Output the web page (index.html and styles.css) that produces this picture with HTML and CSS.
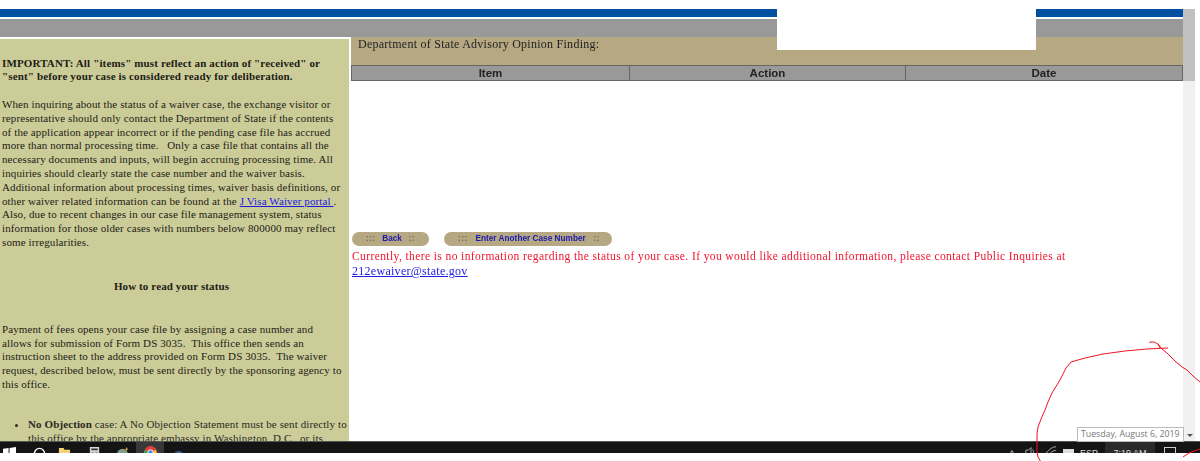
FILE: index.html
```html
<!DOCTYPE html>
<html lang="en">
<head>
<meta charset="utf-8">
<title>J Visa Waiver Case Status</title>
<link rel="stylesheet" href="styles.css">
</head>
<body>
<div class="screen">
  <div class="window">
    <div class="page">
      <div class="blue-bar"></div>
      <div class="gray-bar"></div>
      <div class="columns">
        <aside class="sidebar">
          <p class="important"><b>IMPORTANT: All "items" must reflect an action of "received" or<br>"sent" before your case is considered ready for deliberation.</b></p>
          <p class="para">When inquiring about the status of a waiver case, the exchange visitor or<br>representative should only contact the Department of State if the contents<br>of the application appear incorrect or if the pending case file has accrued<br>more than normal processing time. &nbsp; Only a case file that contains all the<br>necessary documents and inputs, will begin accruing processing time. All<br>inquiries should clearly state the case number and the waiver basis.<br>Additional information about processing times, waiver basis definitions, or<br>other waiver related information can be found at the <a href="#">J Visa Waiver portal </a>.<br>Also, due to recent changes in our case file management system, status<br>information for those older cases with numbers below 800000 may reflect<br>some irregularities.</p>
          <h4 class="how">How to read your status</h4>
          <p class="para fees">Payment of fees opens your case file by assigning a case number and<br>allows for submission of Form DS 3035. &nbsp;This office then sends an<br>instruction sheet to the address provided on Form DS 3035. &nbsp;The waiver<br>request, described below, must be sent directly by the sponsoring agency to<br>this office.</p>
          <ul class="list">
            <li><b>No Objection</b> case: A No Objection Statement must be sent directly to<br>this office by the appropriate embassy in Washington, D.C., or its</li>
          </ul>
        </aside>
        <main class="content">
          <div class="finding">Department of State Advisory Opinion Finding:</div>
          <div class="thead">
            <div class="th">Item</div>
            <div class="th">Action</div>
            <div class="th">Date</div>
          </div>
          <div class="buttons">
            <a class="btn btn-back" href="#"><span class="grip">:::</span><span>Back</span><span class="grip">::</span></a>
            <a class="btn btn-case" href="#"><span class="grip">:::</span><span>Enter Another Case Number</span><span class="grip">::</span></a>
          </div>
          <p class="notice">Currently, there is no information regarding the status of your case. If you would like additional information, please contact Public Inquiries at<br><a href="#">212ewaiver@state.gov</a></p>
        </main>
      </div>
    </div>
    <div class="scrollbar"><div class="thumb"></div></div>
  </div>
  <div class="taskbar">
    <div class="task-left">
      <svg class="ti ti-win" viewBox="0 0 14 14"><path d="M0 2l6-1v5.500H0zM7 1l7-1v6.500H7zM0 7.500h6V13l-6-1zM7 7.500h7V14l-7-1z" fill="#fff"/></svg>
      <svg class="ti ti-search" viewBox="0 0 14 14"><circle cx="7" cy="7" r="5.500" fill="none" stroke="#fff" stroke-width="1.500"/></svg>
      <svg class="ti ti-folder" viewBox="0 0 14 14"><path d="M1 1h5l1 2h6v11H1z" fill="#f3d27a"/></svg>
      <svg class="ti ti-calc" viewBox="0 0 14 14"><path d="M2 0h10v14H2z" fill="#d8d8d8"/><path d="M3.500 1.500h7v2h-7zM4 6h2v1H4zM8 6h2v1H8z" fill="#333"/></svg>
      <svg class="ti ti-globe" viewBox="0 0 14 14"><circle cx="7" cy="8" r="6" fill="#7f9f8a"/><path d="M11 0l2 3-3 1z" fill="#e0a040"/></svg>
      <span class="chrome-tab"><svg class="ti ti-chrome" viewBox="0 0 14 14"><circle cx="7" cy="7" r="7" fill="#e0453a"/><path d="M7 7L1 4 0 8l3 6 4 0z" fill="#3aa757"/><path d="M7 7l6-3 1 4-3 6H7z" fill="#fbc02d"/><circle cx="7" cy="7" r="3.200" fill="#fff"/><circle cx="7" cy="7" r="2.400" fill="#4a86e8"/></svg></span>
      <svg class="ti ti-app" viewBox="0 0 14 14"><circle cx="7" cy="8" r="6" fill="#34507f"/><circle cx="7" cy="6" r="2" fill="#c8d4e8"/></svg>
    </div>
    <div class="tray">
      <span class="chev">^</span>
      <svg class="tray-icon tray-sound" viewBox="0 0 14 12"><path d="M1 5h3l3-3v10L4 9H1zM9 4q2 3 0 6" fill="none" stroke="#bbb"/></svg>
      <svg class="tray-icon tray-wifi" viewBox="0 0 14 12"><path d="M1 9q6-8 12-8M4 11q4-6 9-6" fill="none" stroke="#bbb"/></svg>
      <span class="kbd"></span>
      <span class="lang">ESP</span>
      <span class="clock">7:19 AM</span>
      <span class="notify"></span>
    </div>
  </div>
  <div class="redact"></div>
  <div class="tooltip">Tuesday, August 6, 2019</div>
  <span class="tip-arrow"></span>
  <svg class="scribble" viewBox="0 0 1200 461"><path d="M1150 343l0-1 4 0 4 2 2 4M1168 348l-21 1-22 2-22 3-18 4-14 4-5 6-6 12-8 13-4 9-3 8-4 9-3 8-1 7v17l1 6 3 5 4 5" fill="none" stroke="#f0141e" stroke-width="1"/><path d="M1158 344l4 5 5 4 8 8 7 6 5 3 6 6 7 6M1183 457l6-4 5-2 6-2" fill="none" stroke="#f0141e" stroke-width="1"/></svg>
</div>
</body>
</html>
```

FILE: styles.css
```css
html, body {
  margin: 0;
  padding: 0;
  background: #fff;
}
.screen {
  position: relative;
  width: 1200px;
  height: 461px;
  overflow: hidden;
  background: #fff;
  font-family: "Liberation Serif", "Times New Roman", serif;
}
.window {
  display: flex;
  height: 441px;
  padding-top: 9px;
  box-sizing: border-box;
  padding-right: 5px;
}
.page {
  flex: 1;
  min-width: 0;
  overflow: hidden;
  filter: blur(0.35px);
}
.blue-bar {
  height: 8px;
  background: #0150a0;
}
.gray-bar {
  height: 18px;
  margin-top: 2px;
  background: #999;
}
.columns {
  display: flex;
  height: 404px;
}
.sidebar {
  width: 349px;
  margin-top: 2px;
  margin-right: 2px;
  background: #cccc99;
  color: #1c1c14;
  font-size: 11px;
  line-height: 13.800px;
  letter-spacing: 0.110px;
  overflow: hidden;
  padding-left: 2px;
  box-sizing: border-box;
  flex: none;
}
.sidebar p { margin: 0; }
.important {
  padding-top: 18px;
  line-height: 13px;
  letter-spacing: 0.140px;
}
.para { padding-top: 15px; }
.sidebar a { color: #1a1ae0; }
.how {
  margin: 29px 0 0;
  padding-right: 8px;
  text-align: center;
  font-size: 11px;
  line-height: 14px;
}
.sidebar .fees { padding-top: 30px; }
.list {
  margin: 26px 0 0;
  padding-left: 26px;
  color: #2a2a22;
}
.list li { white-space: nowrap; }
.content {
  flex: 1;
  min-width: 0;
}
.finding {
  height: 28px;
  padding: 1px 0 0 7px;
  box-sizing: border-box;
  background: #b5a882;
  color: #222;
  font-size: 12px;
  line-height: 13px;
  letter-spacing: 0.260px;
}
.thead {
  display: grid;
  grid-template-columns: 278px 276px 1fr;
  height: 16px;
  background: #999;
  border: 1px solid #666;
  box-sizing: border-box;
}
.th {
  font: bold 11.500px/14px "Liberation Sans", Arial, sans-serif;
  color: #222;
  text-align: center;
  border-right: 1px solid #666;
}
.th:last-child { border-right: 0; }
.buttons {
  display: flex;
  gap: 15px;
  margin: 151px 0 0 1px;
}
.btn {
  display: flex;
  align-items: center;
  justify-content: space-between;
  height: 14px;
  padding: 0 14px;
  border-radius: 7px;
  background: #b5a882;
  color: #1a1ab0;
  font: bold 8.200px/14px "Liberation Sans", Arial, sans-serif;
  text-decoration: none;
  box-sizing: border-box;
}
.btn-back { width: 77px; }
.btn-case {
  width: 168px;
  padding: 0 12px 0 14px;
  letter-spacing: 0.040px;
}
.grip {
  color: #6f6a58;
  letter-spacing: 0.500px;
}
.notice {
  margin: 3px 0 0 1px;
  color: #f0142d;
  font-size: 11.500px;
  line-height: 15px;
  letter-spacing: 0.400px;
}
.notice a {
  color: #2020e0;
  font-size: 12px;
  letter-spacing: 0.280px;
}
.scrollbar {
  width: 12px;
  flex: none;
  background: #f0f0f0;
}
.thumb {
  height: 72px;
  background: #c1c1c1;
}
.taskbar {
  display: flex;
  justify-content: space-between;
  height: 12px;
  background: #141414;
  border-top: 1px solid #555;
  box-sizing: border-box;
  overflow: hidden;
}
.task-left {
  display: flex;
  align-items: flex-start;
  height: 40px;
}
.ti {
  width: 13px;
  height: 13px;
  flex: none;
  margin-top: 5px;
}
.ti-win { margin-left: 3px; }
.ti-search { margin-left: 17px; }
.ti-folder { margin-left: 12px; }
.ti-calc { margin-left: 17px; }
.ti-globe { margin-left: 15px; }
.chrome-tab {
  display: block;
  width: 28px;
  height: 14px;
  margin-left: 7px;
  background: #383838;
  text-align: center;
}
.ti-chrome { margin-top: 4px; }
.ti-app { margin-left: 8px; margin-top: 7px; }
.tray {
  display: flex;
  align-items: flex-start;
  color: #ddd;
  font: 9px/12px "Liberation Sans", Arial, sans-serif;
  padding-right: 24px;
}
.chev {
  width: 10px;
  margin-top: 6px;
  text-align: center;
}
.tray-icon {
  width: 12px;
  height: 12px;
  margin-top: 3px;
}
.tray-sound { margin-left: 8px; }
.tray-wifi { margin-left: 8px; }
.kbd {
  width: 11px;
  height: 6px;
  margin: 7px 0 0 6px;
  background: #ddd;
}
.lang {
  margin: 5px 0 0 6px;
}
.clock {
  width: 50px;
  height: 12px;
  margin-left: 7px;
  padding-top: 5px;
  background: #2a2a2a;
  text-align: center;
}
.notify {
  width: 12px;
  height: 14px;
  margin: 5px 0 0 9px;
  border: 1px solid #ccc;
  box-sizing: border-box;
}
.redact {
  position: absolute;
  left: 777px;
  top: 0;
  width: 259px;
  height: 50px;
  background: #fff;
}
.tooltip {
  position: absolute;
  left: 1077px;
  top: 427px;
  width: 107px;
  height: 15px;
  box-sizing: border-box;
  border: 1px solid #bbb;
  background: #fff;
  color: #777;
  font: 8.750px/13px "Open Sans", "Liberation Sans", sans-serif;
  padding-left: 3px;
  white-space: nowrap;
  overflow: hidden;
}
.tip-arrow {
  position: absolute;
  left: 1187px;
  top: 434px;
  border: 3px solid transparent;
  border-top: 3px solid #555;
  border-bottom: 0;
}
.scribble {
  position: absolute;
  left: 0;
  top: 0;
  width: 1200px;
  height: 461px;
  pointer-events: none;
}
```
